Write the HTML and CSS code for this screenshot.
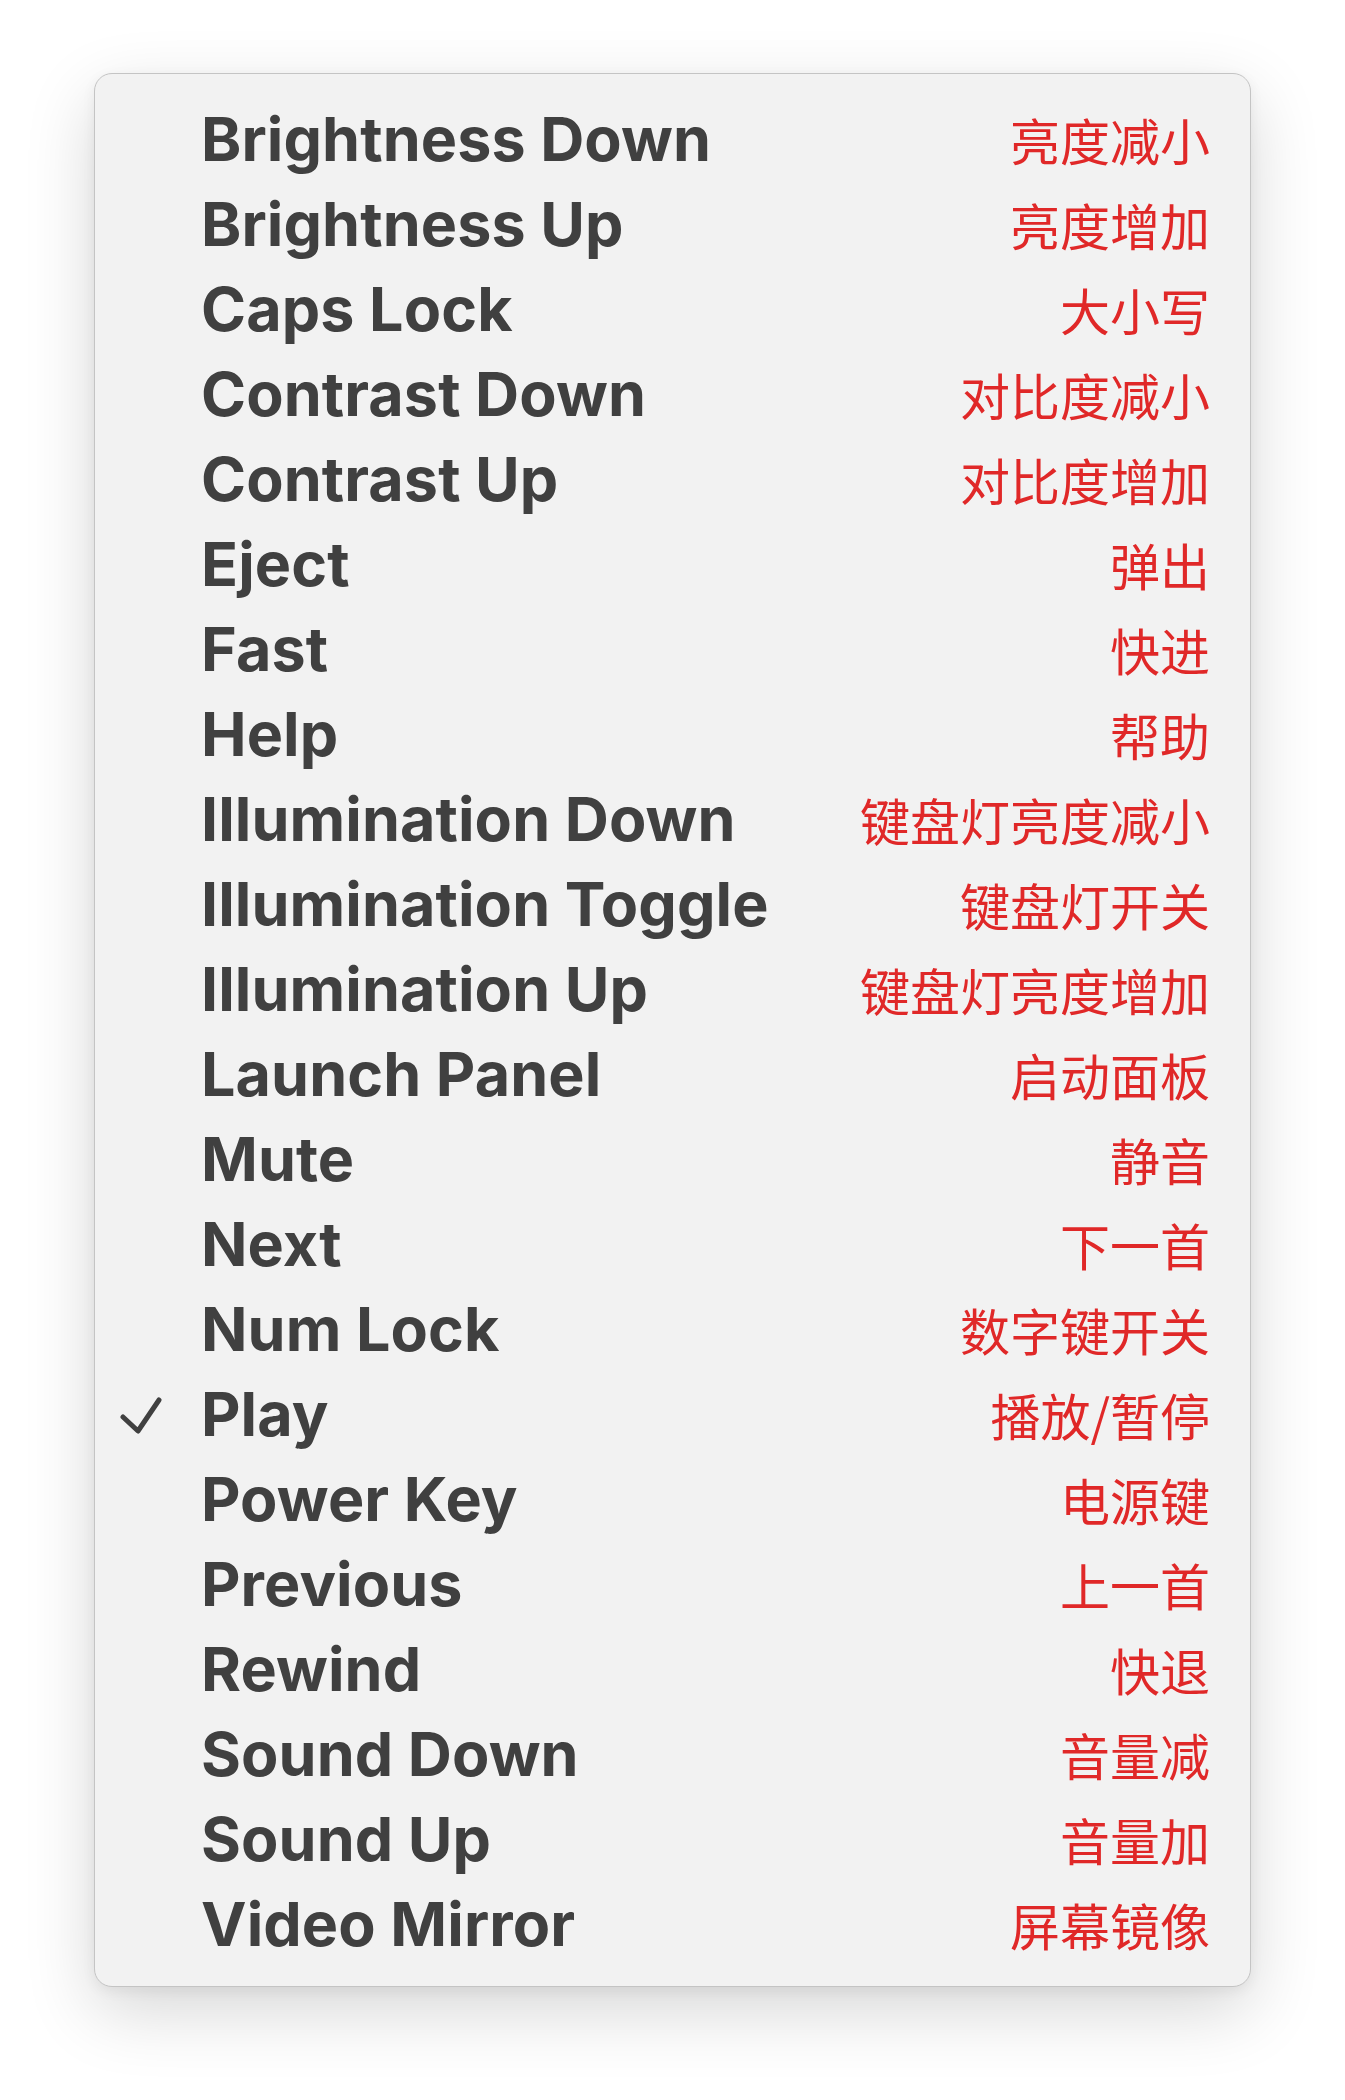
FILE: index.html
```html
<!DOCTYPE html>
<html lang="zh">
<head>
  <meta charset="UTF-8" />
  <meta name="viewport" content="width=device-width, initial-scale=1" />
  <title>Keys</title>
  <link rel="stylesheet" href="styles.css">
</head>
<body>
  <div class="stage">
    <div class="menu" role="menu">
      <div class="item"><span class="check"></span><span class="label">Brightness Down</span><span class="hint">亮度减小</span></div>
      <div class="item"><span class="check"></span><span class="label">Brightness Up</span><span class="hint">亮度增加</span></div>
      <div class="item"><span class="check"></span><span class="label">Caps Lock</span><span class="hint">大小写</span></div>
      <div class="item"><span class="check"></span><span class="label">Contrast Down</span><span class="hint">对比度减小</span></div>
      <div class="item"><span class="check"></span><span class="label">Contrast Up</span><span class="hint">对比度增加</span></div>
      <div class="item"><span class="check"></span><span class="label">Eject</span><span class="hint">弹出</span></div>
      <div class="item"><span class="check"></span><span class="label">Fast</span><span class="hint">快进</span></div>
      <div class="item"><span class="check"></span><span class="label">Help</span><span class="hint">帮助</span></div>
      <div class="item"><span class="check"></span><span class="label">Illumination Down</span><span class="hint">键盘灯亮度减小</span></div>
      <div class="item"><span class="check"></span><span class="label">Illumination Toggle</span><span class="hint">键盘灯开关</span></div>
      <div class="item"><span class="check"></span><span class="label">Illumination Up</span><span class="hint">键盘灯亮度增加</span></div>
      <div class="item"><span class="check"></span><span class="label">Launch Panel</span><span class="hint">启动面板</span></div>
      <div class="item"><span class="check"></span><span class="label">Mute</span><span class="hint">静音</span></div>
      <div class="item"><span class="check"></span><span class="label">Next</span><span class="hint">下一首</span></div>
      <div class="item"><span class="check"></span><span class="label">Num Lock</span><span class="hint">数字键开关</span></div>
      <div class="item checked">
        <span class="check">
          <svg width="42" height="38" viewBox="0 0 42 38"><polyline points="3,20 18,34 39,3" fill="none" stroke="#404040" stroke-width="5" stroke-linecap="round" stroke-linejoin="round"/></svg>
        </span>
        <span class="label">Play</span><span class="hint">播放/暂停</span>
      </div>
      <div class="item"><span class="check"></span><span class="label">Power Key</span><span class="hint">电源键</span></div>
      <div class="item"><span class="check"></span><span class="label">Previous</span><span class="hint">上一首</span></div>
      <div class="item"><span class="check"></span><span class="label">Rewind</span><span class="hint">快退</span></div>
      <div class="item"><span class="check"></span><span class="label">Sound Down</span><span class="hint">音量减</span></div>
      <div class="item"><span class="check"></span><span class="label">Sound Up</span><span class="hint">音量加</span></div>
      <div class="item"><span class="check"></span><span class="label">Video Mirror</span><span class="hint">屏幕镜像</span></div>
    </div>
  </div>
</body>
</html>
```

FILE: styles.css
```css
* {
  box-sizing: border-box;
}
body {
  margin: 0;
  background: #ffffff;
  font-family: Inter, "Noto Sans", sans-serif;
}
.stage {
  padding: 73px 94px 100px;
}
.menu {
  width: 1157px;
  background: #f2f2f2;
  border: 1px solid #c4c4c4;
  border-radius: 18px;
  padding: 23px 0 19px;
  box-shadow: 0 24px 70px rgba(0, 0, 0, 0.16), 0 4px 14px rgba(0, 0, 0, 0.06);
}
.item {
  display: flex;
  align-items: baseline;
  height: 85px;
  padding: 0 40px 0 24px;
  line-height: 85px;
}
.check {
  width: 82px;
  flex: none;
  align-self: center;
  display: flex;
  align-items: center;
  height: 85px;
}
.check svg {
  display: block;
  margin: 3px 0 0 1px;
}
.label {
  flex: 1;
  font-size: 61px;
  font-weight: 700;
  color: #404040;
  letter-spacing: 0.1px;
}
.hint {
  font-family: "Noto Sans CJK SC", sans-serif;
  font-size: 50px;
  font-weight: 400;
  color: #e02828;
}
```
